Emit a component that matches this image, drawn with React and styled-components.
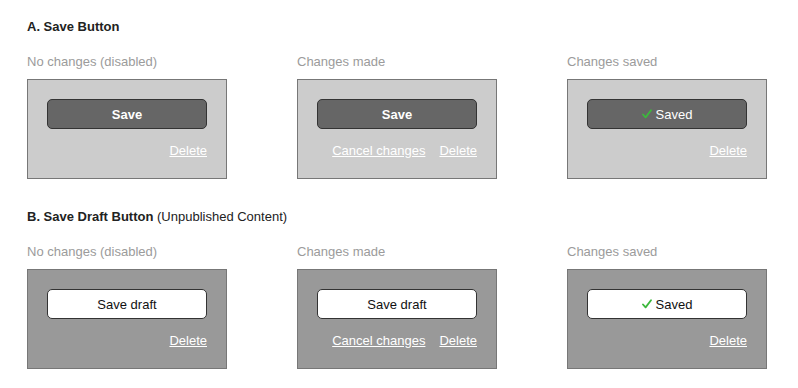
import styled, { createGlobalStyle } from 'styled-components'

const GlobalStyle = createGlobalStyle`
  body {
    margin: 0;
    background: #ffffff;
    font-family: "Liberation Sans", Arial, sans-serif;
  }
`;

const Page = styled.div`
  padding: 19px 0 0 27px;
  display: flex;
  flex-direction: column;
  gap: 30px;
`;

const Section = styled.section`
  display: flex;
  flex-direction: column;
`;

const Heading = styled.h2`
  margin: 0 0 19px;
  font-size: 13px;
  line-height: 16px;
  font-weight: bold;
  color: #222;
  span {
    font-weight: normal;
  }
`;

const Row = styled.div`
  display: flex;
  gap: 70px;
`;

const Column = styled.div`
  display: flex;
  flex-direction: column;
  gap: 9px;
  width: 200px;
`;

const Label = styled.div`
  font-size: 13px;
  line-height: 16px;
  color: #9b9b9b;
`;

const Panel = styled.div`
  box-sizing: border-box;
  width: 200px;
  height: 100px;
  padding: 19px 19px 0;
  background: ${p => (p.$draft ? '#999999' : '#cccccc')};
  border: 1px solid #777;
  display: flex;
  flex-direction: column;
  gap: 14px;
`;

const Button = styled.div`
  box-sizing: border-box;
  height: 30px;
  border-radius: 5px;
  border: 1px solid #333;
  background: ${p => (p.$draft ? '#ffffff' : '#666666')};
  color: ${p => (p.$draft ? '#111' : '#ffffff')};
  font-size: 13px;
  font-weight: ${p => (p.$bold ? 'bold' : 'normal')};
  display: flex;
  align-items: center;
  justify-content: center;
  gap: 4px;
`;

const Links = styled.div`
  display: flex;
  justify-content: flex-end;
  gap: 14px;
`;

const Link = styled.a`
  font-size: 13px;
  line-height: 16px;
  color: #ffffff;
  text-decoration: underline;
  cursor: pointer;
`;

const Check = () => (
  <svg width="10" height="10" viewBox="0 0 10 10">
    <path d="M1 5.5 L3.6 8.4 L9 1.2" fill="none" stroke="#3cb83c" strokeWidth="1.8" strokeLinecap="round" strokeLinejoin="round" />
  </svg>
);

const states = [
  { label: 'No changes (disabled)', cancel: false, saved: false },
  { label: 'Changes made', cancel: true, saved: false },
  { label: 'Changes saved', cancel: false, saved: true },
];

function StateRow({ draft }) {
  return (
    <Row>
      {states.map(s => (
        <Column key={s.label}>
          <Label>{s.label}</Label>
          <Panel $draft={draft}>
            <Button $draft={draft} $bold={!draft && !s.saved}>
              {s.saved ? (
                <>
                  <Check />
                  Saved
                </>
              ) : draft ? 'Save draft' : 'Save'}
            </Button>
            <Links>
              {s.cancel && <Link>Cancel changes</Link>}
              <Link>Delete</Link>
            </Links>
          </Panel>
        </Column>
      ))}
    </Row>
  );
}

export default function App() {
  return (
    <>
      <GlobalStyle />
      <Page>
        <Section>
          <Heading>A. Save Button</Heading>
          <StateRow />
        </Section>
        <Section>
          <Heading>
            B. Save Draft Button <span>(Unpublished Content)</span>
          </Heading>
          <StateRow draft />
        </Section>
      </Page>
    </>
  );
}
